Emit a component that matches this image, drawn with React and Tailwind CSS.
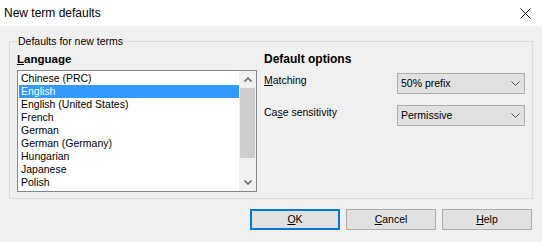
import React, { useState } from "react";

const languages = [
  "Chinese (PRC)",
  "English",
  "English (United States)",
  "French",
  "German",
  "German (Germany)",
  "Hungarian",
  "Japanese",
  "Polish",
  "Portuguese",
];

const Chevron = () => (
  <svg width="9" height="5" viewBox="0 0 9 5" className="shrink-0">
    <path d="M0.5 0.5 L4.5 4.5 L8.5 0.5" fill="none" stroke="#555" strokeWidth="1" />
  </svg>
);

const Combo = ({ value }) => (
  <div className="w-[128px] h-[21px] border border-[#adadad] bg-[#e1e1e1] flex items-center justify-between pl-[3px] pr-[4px] text-[10.5px] text-black">
    <span>{value}</span>
    <Chevron />
  </div>
);

const Button = ({ label, accel, focused }) => (
  <button
    className={
      focused
        ? "w-[90px] h-[21px] bg-[#e1e1e1] border-2 border-[#0078d7] text-[10.5px] text-black flex items-center justify-center"
        : "w-[90px] h-[21px] bg-[#e1e1e1] border border-[#adadad] text-[10.5px] text-black flex items-center justify-center"
    }
  >
    <span>
      <span className="underline underline-offset-1">{accel}</span>
      {label.slice(accel.length)}
    </span>
  </button>
);

const App = () => {
  const [selected, setSelected] = useState("English");

  return (
    <div className="w-[542px] h-[242px] flex flex-col bg-[#f0f0f0] overflow-hidden font-['Liberation_Sans',Arial,sans-serif] text-black">
      {/* title bar */}
      <div className="h-[26px] bg-white flex items-center justify-between pl-[4px] pr-[11px]">
        <span className="text-[12px] leading-[14px]">New term defaults</span>
        <svg width="11" height="11" viewBox="0 0 11 11">
          <path d="M0.5 0.5 L10.5 10.5 M10.5 0.5 L0.5 10.5" stroke="#111" strokeWidth="1" />
        </svg>
      </div>

      <div className="flex flex-col px-[9px] pt-[9px]">
        <fieldset className="border border-[#dcdcdc] pl-[7px] pr-[7px] pt-[4px] pb-[6px] w-[524px]">
          <legend className="px-[1px] text-[10.5px] leading-[13px]">Defaults for new terms</legend>
          <div className="flex gap-[7px]">
            <div className="flex flex-col">
              <div className="h-[15px] text-[11.5px] leading-[15px] font-bold">
                <span className="underline underline-offset-1">L</span>anguage
              </div>
              <div className="mt-[3px] w-[240px] h-[122px] border border-[#828790] bg-white flex">
                <div className="flex-1 overflow-hidden pt-[1px] pl-[1px]">
                  {languages.map((lang) => (
                    <div
                      key={lang}
                      onClick={() => setSelected(lang)}
                      className={
                        lang === selected
                          ? "h-[13px] leading-[13px] text-[10.5px] pl-[2px] bg-[#3399ff] text-white"
                          : "h-[13px] leading-[13px] text-[10.5px] pl-[2px]"
                      }
                    >
                      {lang}
                    </div>
                  ))}
                </div>
                <div className="w-[17px] bg-[#f0f0f0] flex flex-col items-center">
                  <div className="h-[17px] flex items-center justify-center">
                    <svg width="8" height="5" viewBox="0 0 8 5">
                      <path d="M0.5 4.5 L4 1 L7.5 4.5" fill="none" stroke="#606060" strokeWidth="1.5" />
                    </svg>
                  </div>
                  <div className="w-[15px] h-[70px] bg-[#cdcdcd]" />
                  <div className="flex-1" />
                  <div className="h-[17px] flex items-center justify-center">
                    <svg width="8" height="5" viewBox="0 0 8 5">
                      <path d="M0.5 0.5 L4 4 L7.5 0.5" fill="none" stroke="#606060" strokeWidth="1.5" />
                    </svg>
                  </div>
                </div>
              </div>
            </div>

            <div className="flex flex-col flex-1">
              <div className="h-[15px] text-[12px] leading-[15px] font-bold">Default options</div>
              <div className="mt-[6px] flex justify-between items-start">
                <span className="text-[10.5px] leading-[14px]">
                  <span className="underline underline-offset-1">M</span>atching
                </span>
                <Combo value="50% prefix" />
              </div>
              <div className="mt-[11px] flex justify-between items-start">
                <span className="text-[10.5px] leading-[14px]">
                  Ca<span className="underline underline-offset-1">s</span>e sensitivity
                </span>
                <Combo value="Permissive" />
              </div>
            </div>
          </div>
        </fieldset>

        <div className="mt-[10px] flex justify-end gap-[6px] pr-[1px]">
          <Button label="OK" accel="O" focused />
          <Button label="Cancel" accel="C" />
          <Button label="Help" accel="H" />
        </div>
      </div>
    </div>
  );
};

export default App;
